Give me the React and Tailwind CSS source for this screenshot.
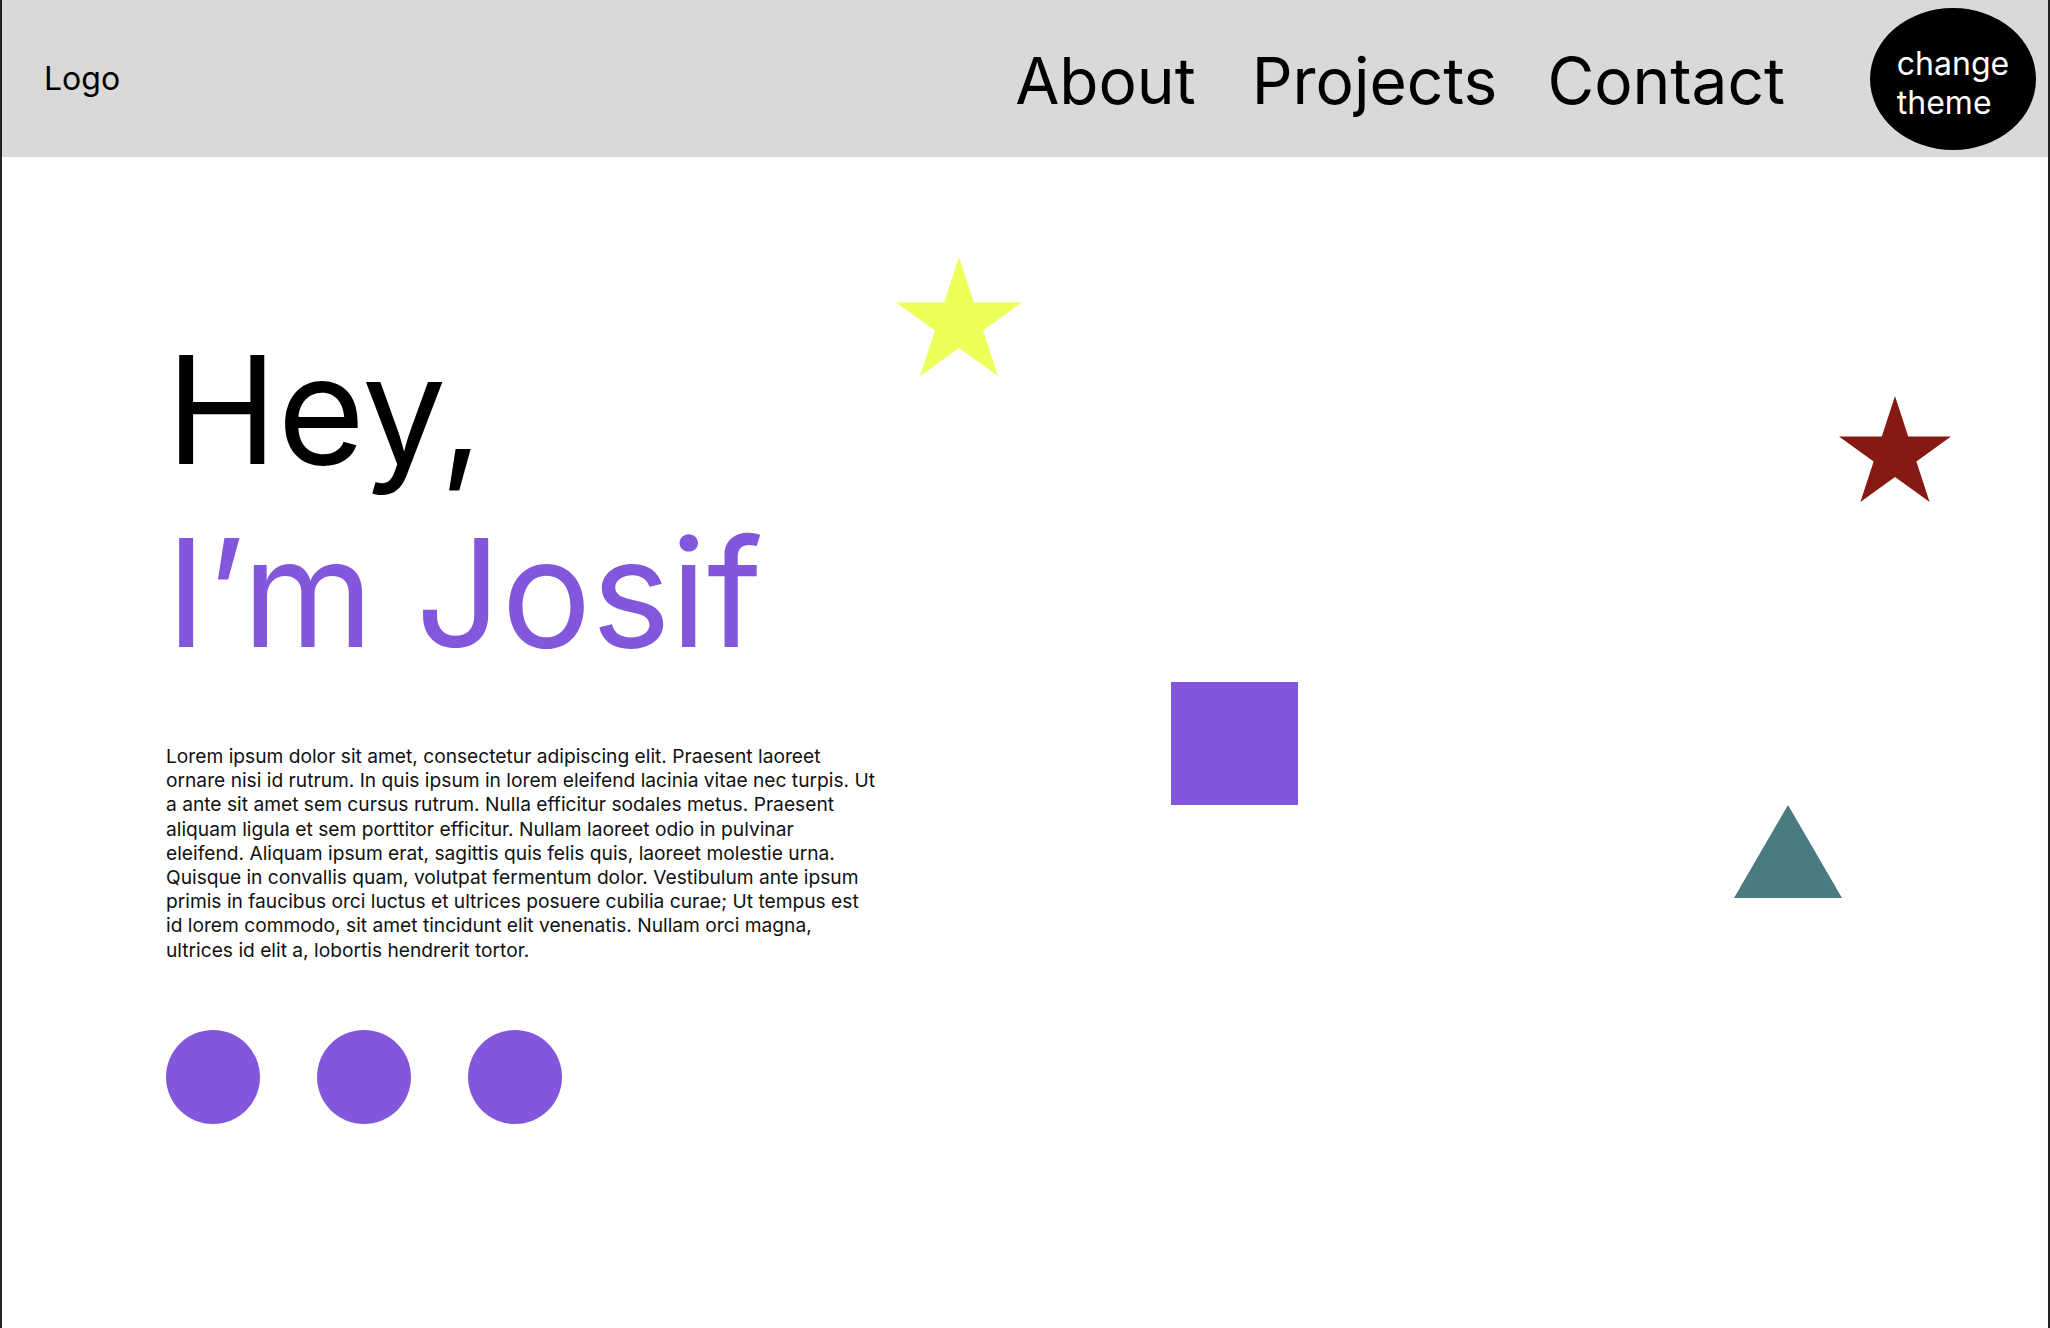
import React from "react";

const STAR = "47.55,0 58.78,34.55 95.1,34.55 65.7,55.9 76.95,90.45 47.55,69.1 18.15,90.45 29.4,55.9 0,34.55 36.33,34.55";

const LINES = [
  "Lorem ipsum dolor sit amet, consectetur adipiscing elit. Praesent laoreet",
  "ornare nisi id rutrum. In quis ipsum in lorem eleifend lacinia vitae nec turpis. Ut",
  "a ante sit amet sem cursus rutrum. Nulla efficitur sodales metus. Praesent",
  "aliquam ligula et sem porttitor efficitur. Nullam laoreet odio in pulvinar",
  "eleifend. Aliquam ipsum erat, sagittis quis felis quis, laoreet molestie urna.",
  "Quisque in convallis quam, volutpat fermentum dolor. Vestibulum ante ipsum",
  "primis in faucibus orci luctus et ultrices posuere cubilia curae; Ut tempus est",
  "id lorem commodo, sit amet tincidunt elit venenatis. Nullam orci magna,",
  "ultrices id elit a, lobortis hendrerit tortor.",
];

function Star({ className, color }) {
  return (
    <svg className={className} viewBox="0 0 95.1 90.45" preserveAspectRatio="none">
      <polygon points={STAR} fill={color} />
    </svg>
  );
}

export default function App() {
  return (
    <div
      className="h-[1328px] w-full overflow-hidden border-x-2 border-[#222222] bg-white text-black flex flex-col"
      style={{ fontFamily: "Inter, 'Noto Sans', 'Liberation Sans', sans-serif" }}
    >
      <header className="h-[157px] shrink-0 bg-[#d9d9d9] flex items-center pl-[42px] pr-[12px]">
        <div className="text-[32px] leading-none">Logo</div>
        <nav className="ml-auto mr-[85px] pt-[4px] flex items-center text-[64px] leading-none">
          <a className="mr-[56px]">About</a>
          <a className="mr-[50px]">Projects</a>
          <a>Contact</a>
        </nav>
        <button className="w-[166px] h-[142px] rounded-[50%] bg-black text-white flex items-center justify-center">
          <span className="pt-[8px] text-left text-[32px] leading-[39px]">
            change
            <br />
            theme
          </span>
        </button>
      </header>

      <main className="relative flex-1">
        <section className="pl-[164px] pt-[161px]">
          <h1 className="text-[150px] leading-[183px] font-normal">
            <span className="block">Hey,</span>
            <span className="block text-[#8257dc]">I’m Josif</span>
          </h1>
          <p className="mt-[60px] text-[19.2px] leading-[24.2px] text-[#111]">
            {LINES.map((l) => (
              <span key={l} className="block whitespace-nowrap">
                {l}
              </span>
            ))}
          </p>
          <div className="mt-[68px] flex gap-[57px]">
            <div className="w-[94px] h-[94px] rounded-full bg-[#8257dc]" />
            <div className="w-[94px] h-[94px] rounded-full bg-[#8257dc]" />
            <div className="w-[94px] h-[94px] rounded-full bg-[#8257dc]" />
          </div>
        </section>

        <Star className="absolute left-[894px] top-[100px] w-[126px] h-[119px]" color="#edff58" />
        <Star className="absolute left-[1837px] top-[239px] w-[112px] h-[106px]" color="#861a13" />
        <div className="absolute left-[1169px] top-[525px] w-[127px] h-[123px] bg-[#8257dc]" />
        <svg className="absolute left-[1732px] top-[648px] w-[108px] h-[93px]" viewBox="0 0 108 93" preserveAspectRatio="none">
          <polygon points="54,0 108,93 0,93" fill="#4a7b80" />
        </svg>
      </main>
    </div>
  );
}
